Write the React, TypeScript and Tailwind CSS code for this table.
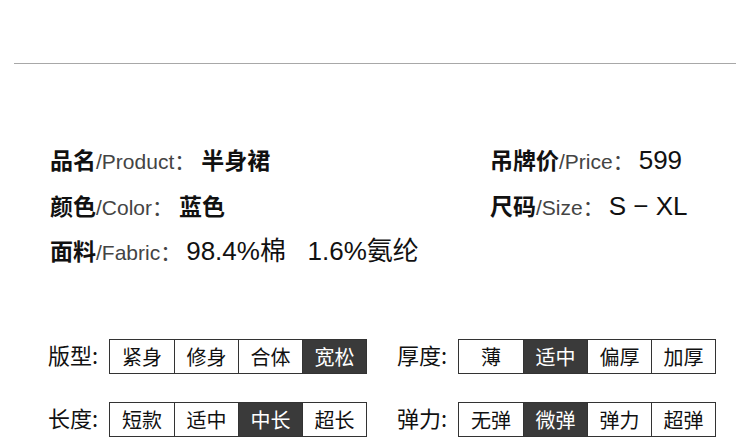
import React from "react";

const cjk = '"Liberation Sans", "Noto Sans CJK SC", sans-serif';

function InfoItem({ zh, en, value, num }: { zh: string; en: string; value: React.ReactNode; num?: boolean }) {
  return (
    <div className="flex items-baseline h-[45.5px] pt-[6px] whitespace-nowrap">
      <span className="text-[23px] leading-[34px] font-bold text-[#111]" style={{ fontFamily: '"Noto Sans CJK SC", sans-serif' }}>{zh}</span>
      <span className="text-[21px] leading-[34px] text-[#444]" style={{ fontFamily: cjk }}>/{en}：</span>
      <span
        className={num ? "text-[26px] leading-[34px] text-[#111] ml-[5px]" : "text-[23px] leading-[34px] font-bold text-[#111] ml-[6px]"}
        style={{ fontFamily: cjk }}
      >
        {value}
      </span>
    </div>
  );
}

function Options({ label, items, active }: { label: string; items: string[]; active: number }) {
  return (
    <div className="flex items-center">
      <span className="w-[61px] text-[22px] leading-[30px] pb-[6px] text-[#111]" style={{ fontFamily: '"Noto Sans CJK SC", sans-serif' }}>{label}:</span>
      <div className="flex border border-[#333]">
        {items.map((t, i) => (
          <div
            key={t}
            className={
              "w-[64px] h-[33px] flex items-center justify-center text-[20px] " +
              (i > 0 ? "border-l border-[#333] " : "") +
              (i === active ? "bg-[#3a3a3a] text-white" : "bg-white text-[#111]")
            }
            style={{ fontFamily: '"Noto Sans CJK SC", sans-serif' }}
          >
            {t}
          </div>
        ))}
      </div>
    </div>
  );
}

export default function App() {
  return (
    <div className="w-[750px] h-[445px] bg-white overflow-hidden">
      <div className="pt-[63px] px-[14px]">
        <div className="h-px bg-[#a8a8a8]" />
      </div>
      <div className="flex pt-[72px] pl-[50px]">
        <div className="w-[440px]">
          <InfoItem zh="品名" en="Product" value="半身裙" />
          <InfoItem zh="颜色" en="Color" value="蓝色" />
          <InfoItem zh="面料" en="Fabric" value={<span>98.4%棉&nbsp;&nbsp;&nbsp;1.6%氨纶</span>} num />
        </div>
        <div>
          <InfoItem zh="吊牌价" en="Price" value="599" num />
          <InfoItem zh="尺码" en="Size" value="S − XL" num />
        </div>
      </div>
      <div className="pt-[66px] pl-[48px] flex flex-col gap-[27px]">
        <div className="flex gap-[30px]">
          <Options label="版型" items={["紧身", "修身", "合体", "宽松"]} active={3} />
          <Options label="厚度" items={["薄", "适中", "偏厚", "加厚"]} active={1} />
        </div>
        <div className="flex gap-[30px]">
          <Options label="长度" items={["短款", "适中", "中长", "超长"]} active={2} />
          <Options label="弹力" items={["无弹", "微弹", "弹力", "超弹"]} active={1} />
        </div>
      </div>
    </div>
  );
}
